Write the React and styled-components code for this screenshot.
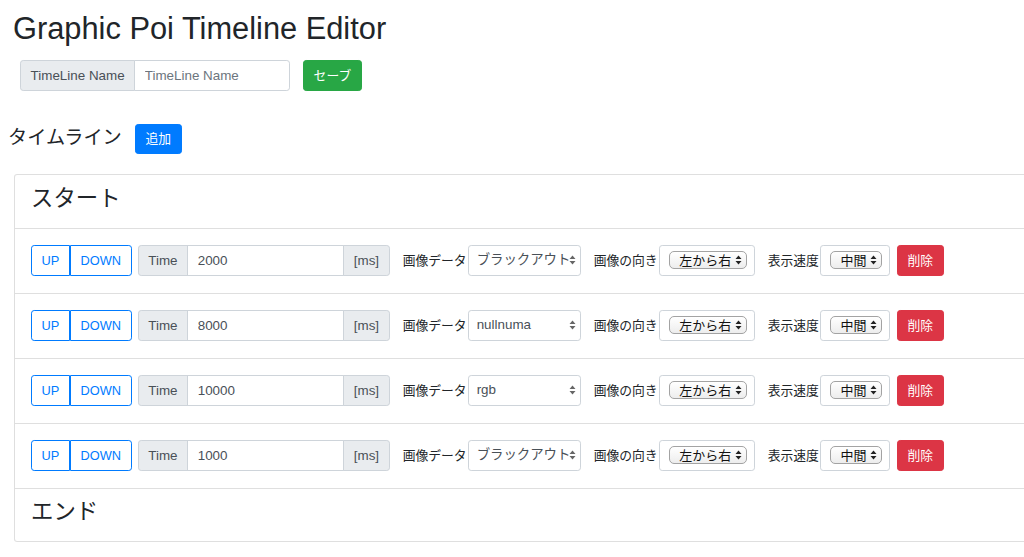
import React from "react";
import styled, { createGlobalStyle, css } from "styled-components";

const GlobalStyle = createGlobalStyle`
  html, body {
    margin: 0;
    background: #fff;
    overflow: hidden;
  }
  body {
    font-family: "Liberation Sans", "Noto Sans CJK JP", sans-serif;
    font-size: 12.8px;
    line-height: 1.5;
    color: #212529;
  }
  * { box-sizing: border-box; }
`;

const rows = [
  { time: "2000", image: "ブラックアウト" },
  { time: "8000", image: "nullnuma" },
  { time: "10000", image: "rgb" },
  { time: "1000", image: "ブラックアウト" },
];

const Page = styled.div`
  padding: 10px 0 0 8px;
`;

const Title = styled.h1`
  margin: 0 0 0 5px;
  font-size: 30.8px;
  font-weight: 500;
  line-height: 38px;
`;

const NameForm = styled.div`
  display: flex;
  align-items: center;
  gap: 13px;
  margin: 12px 0 0 12px;
`;

const InputGroup = styled.div`
  display: flex;
  width: ${(p) => p.$width}px;
  height: 31px;
  font-size: 13.4px;
`;

const Addon = styled.span`
  display: flex;
  align-items: center;
  padding: 1px 9.6px 0;
  background: #e9ecef;
  border: 1px solid #ced4da;
  color: #495057;
  white-space: nowrap;
  ${(p) =>
    p.$side === "left"
      ? css`
          border-radius: 3.2px 0 0 3.2px;
        `
      : css`
          border-radius: 0 3.2px 3.2px 0;
          margin-left: -1px;
        `}
`;

const TextInput = styled.input`
  flex: 1;
  min-width: 0;
  margin-left: -1px;
  padding: 1px 9.6px 0;
  border: 1px solid #ced4da;
  border-radius: ${(p) => (p.$end ? "0 3.2px 3.2px 0" : "0")};
  font: inherit;
  color: #495057;
  background: #fff;
  outline: none;
  &::placeholder {
    color: #6c757d;
  }
`;

const colors = {
  success: "#28a745",
  primary: "#007bff",
  danger: "#dc3545",
};

const Button = styled.button`
  height: ${(p) => p.$h || 31}px;
  padding: 0 9.6px;
  border: 1px solid ${(p) => colors[p.$variant]};
  border-radius: 3.2px;
  font: inherit;
  white-space: nowrap;
  ${(p) =>
    p.$outline
      ? css`
          background: #fff;
          color: ${colors[p.$variant]};
        `
      : css`
          background: ${colors[p.$variant]};
          color: #fff;
        `}
`;

const BtnGroup = styled.div`
  display: flex;
  ${Button}:first-child {
    border-radius: 3.2px 0 0 3.2px;
  }
  ${Button}:last-child {
    border-radius: 0 3.2px 3.2px 0;
  }
`;

const SectionHead = styled.div`
  display: flex;
  align-items: center;
  gap: 13px;
  margin-top: 33px;
`;

const SectionTitle = styled.h4`
  margin: 0 0 3px;
  font-size: 19.2px;
  font-weight: 400;
  line-height: 23px;
`;

const Card = styled.div`
  margin: 20px 0 0 6px;
  border: 1px solid rgba(0, 0, 0, 0.125);
  border-right: none;
  border-radius: 3.2px 0 0 3.2px;
`;

const CardTitle = styled.h3`
  margin: 0;
  padding: 9.6px 16px 16px;
  font-size: 22.4px;
  font-weight: 400;
  line-height: 27px;
  & + * {
    border-top: 1px solid rgba(0, 0, 0, 0.125);
  }
`;

const Row = styled.div`
  display: flex;
  align-items: center;
  padding: 16px 16px 17px;
  & + * {
    border-top: 1px solid rgba(0, 0, 0, 0.125);
  }
`;

const Label = styled.span`
  margin: 0 1px 0 13px;
  white-space: nowrap;
`;

const SelectBox = styled.div`
  position: relative;
  display: flex;
  align-items: center;
  flex-shrink: 0;
  width: ${(p) => p.$width}px;
  height: 31px;
  padding: 0 ${(p) => (p.$native ? "9.6px" : "8px")};
  border: 1px solid #ced4da;
  border-radius: 3.2px;
  background: #fff;
  color: #495057;
  font-size: 13.4px;
  white-space: nowrap;
`;

const Arrows = styled.svg`
  position: absolute;
  right: 4px;
  top: 50%;
  transform: translateY(-50%);
`;

const NativeSelect = styled.span`
  display: inline-flex;
  align-items: center;
  gap: 4px;
  height: 18px;
  padding: 0 4px 0 9px;
  border: 1px solid #a3a3a3;
  border-radius: 5px;
  background: linear-gradient(#ffffff, #ededed);
  color: #111;
  font-size: 13px;
  line-height: 1;
`;

const DoubleArrow = ({ color = "#555", inline }) => {
  const Cmp = inline ? "svg" : Arrows;
  return (
    <Cmp width="7" height="10" viewBox="0 0 7 10">
      <path d="M3.5 0.5 L6.5 4 H0.5Z M0.5 6 H6.5 L3.5 9.5Z" fill={color} />
    </Cmp>
  );
};

const TimelineRow = ({ time, image }) => (
  <Row>
    <BtnGroup>
      <Button $variant="primary" $outline>
        UP
      </Button>
      <Button $variant="primary" $outline>
        DOWN
      </Button>
    </BtnGroup>
    <InputGroup $width={252} style={{ marginLeft: 6 }}>
      <Addon $side="left">Time</Addon>
      <TextInput defaultValue={time} />
      <Addon $side="right">[ms]</Addon>
    </InputGroup>
    <Label>画像データ</Label>
    <SelectBox $width={113}>
      {image}
      <DoubleArrow color="#666" />
    </SelectBox>
    <Label>画像の向き</Label>
    <SelectBox $width={96} $native>
      <NativeSelect>
        左から右
        <DoubleArrow color="#222" inline />
      </NativeSelect>
    </SelectBox>
    <Label>表示速度</Label>
    <SelectBox $width={70} $native>
      <NativeSelect>
        中間
        <DoubleArrow color="#222" inline />
      </NativeSelect>
    </SelectBox>
    <Button $variant="danger" style={{ marginLeft: 7 }}>
      削除
    </Button>
  </Row>
);

export default function App() {
  return (
    <>
      <GlobalStyle />
      <Page>
        <Title>Graphic Poi Timeline Editor</Title>
        <NameForm>
          <InputGroup $width={270}>
            <Addon $side="left">TimeLine Name</Addon>
            <TextInput placeholder="TimeLine Name" $end />
          </InputGroup>
          <Button $variant="success">セーブ</Button>
        </NameForm>
        <SectionHead>
          <SectionTitle>タイムライン</SectionTitle>
          <Button $variant="primary" $h={30}>
            追加
          </Button>
        </SectionHead>
        <Card>
          <CardTitle>スタート</CardTitle>
          {rows.map((r, i) => (
            <TimelineRow key={i} {...r} />
          ))}
          <CardTitle>エンド</CardTitle>
        </Card>
      </Page>
    </>
  );
}
